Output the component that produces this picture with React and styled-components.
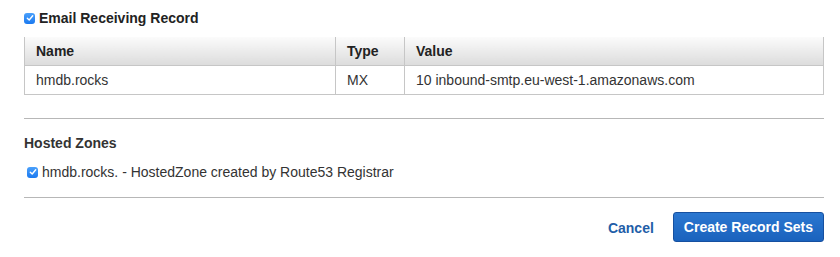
import React from "react";
import styled, { createGlobalStyle } from "styled-components";

const GlobalStyle = createGlobalStyle`
  body {
    margin: 0;
    background: #fff;
    font-family: "Liberation Sans", Arial, sans-serif;
    color: #333;
  }
`;

const Page = styled.div`
  width: 840px;
  height: 257px;
  padding: 10px 16px 0 24px;
  box-sizing: border-box;
  overflow: hidden;
`;

const CheckRow = styled.label`
  display: flex;
  align-items: center;
  gap: 4px;
  font-size: 14px;
  font-weight: ${(p) => (p.$bold ? 700 : 400)};
  color: ${(p) => (p.$bold ? "#222" : "#333")};
  padding-left: ${(p) => p.$indent || 0}px;
  margin-top: ${(p) => p.$top || 0}px;
`;

const Box = styled.span`
  display: inline-flex;
  align-items: center;
  justify-content: center;
  width: 11px;
  height: 11px;
  border-radius: 3px;
  background: linear-gradient(#4aa0fb, #1a79f0);
  flex-shrink: 0;
`;

const Table = styled.table`
  width: 100%;
  border-collapse: collapse;
  font-size: 14px;
  margin-top: 11px;
  border-left: 1px solid #c6c6c6;
  border-right: 1px solid #c6c6c6;
  border-bottom: 1px solid #c6c6c6;
`;

const Th = styled.th`
  text-align: left;
  font-weight: 700;
  color: #222;
  height: 28px;
  padding: 0 11px;
  background: linear-gradient(#fbfbfb, #dcdcdc);
  border-bottom: 1px solid #c6c6c6;
  & + & {
    border-left: 1px solid #c6c6c6;
  }
`;

const Td = styled.td`
  height: 28px;
  padding: 0 11px;
  color: #333;
  & + & {
    border-left: 1px solid #c6c6c6;
  }
`;

const Divider = styled.hr`
  border: 0;
  border-top: 1px solid #b7b7b7;
  margin: ${(p) => p.$top}px 0 0;
`;

const Heading = styled.h3`
  margin: 16px 0 0;
  font-size: 14px;
  font-weight: 700;
  color: #333;
  line-height: 16px;
`;

const Footer = styled.div`
  display: flex;
  justify-content: flex-end;
  align-items: center;
  gap: 19px;
  margin-top: 14px;
`;

const LinkButton = styled.button`
  border: 0;
  background: none;
  font-family: inherit;
  font-size: 14px;
  font-weight: 700;
  color: #1f5ea8;
  padding: 0;
  margin-top: 2px;
  cursor: pointer;
`;

const PrimaryButton = styled.button`
  height: 30px;
  padding: 0 10px;
  border: 1px solid #1650a0;
  border-radius: 3px;
  background: linear-gradient(#2b77d0, #1a62bd);
  color: #fff;
  font-family: inherit;
  font-size: 14px;
  font-weight: 700;
  cursor: pointer;
`;

const Check = () => (
  <Box>
    <svg width="8" height="8" viewBox="0 0 8 8">
      <path d="M1.3 4.2 L3.2 6 L6.7 1.8" fill="none" stroke="#fff" strokeWidth="1.4" strokeLinecap="round" strokeLinejoin="round" />
    </svg>
  </Box>
);

export default function App() {
  return (
    <Page>
      <GlobalStyle />
      <CheckRow $bold>
        <Check />
        Email Receiving Record
      </CheckRow>
      <Table>
        <colgroup>
          <col style={{ width: 311 }} />
          <col style={{ width: 69 }} />
          <col />
        </colgroup>
        <thead>
          <tr>
            <Th>Name</Th>
            <Th>Type</Th>
            <Th>Value</Th>
          </tr>
        </thead>
        <tbody>
          <tr>
            <Td>hmdb.rocks</Td>
            <Td>MX</Td>
            <Td>10 inbound-smtp.eu-west-1.amazonaws.com</Td>
          </tr>
        </tbody>
      </Table>
      <Divider $top={23} />
      <Heading>Hosted Zones</Heading>
      <CheckRow $indent={3} $top={13}>
        <Check />
        hmdb.rocks. - HostedZone created by Route53 Registrar
      </CheckRow>
      <Divider $top={17} />
      <Footer>
        <LinkButton>Cancel</LinkButton>
        <PrimaryButton>Create Record Sets</PrimaryButton>
      </Footer>
    </Page>
  );
}
